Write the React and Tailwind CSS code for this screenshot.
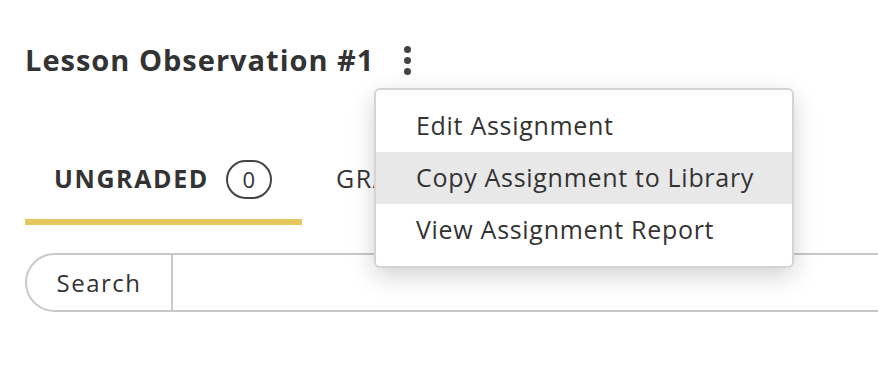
import React from 'react';

const menuItems = ['Edit Assignment', 'Copy Assignment to Library', 'View Assignment Report'];

export default function App() {
  return (
    <div className="relative h-[382px] w-[878px] overflow-hidden bg-white text-[#333] font-['Open_Sans',sans-serif]">
      <div className="pl-[25px] pt-[40px]">
        {/* Title */}
        <div className="flex items-center h-[40px]">
          <h1 className="text-[29px] font-bold tracking-[1px] text-[#333]">Lesson Observation #1</h1>
          <button className="ml-[30px] flex flex-col items-center gap-[4px]">
            <span className="block h-[7px] w-[7px] rounded-full bg-[#444]" />
            <span className="block h-[7px] w-[7px] rounded-full bg-[#444]" />
            <span className="block h-[7px] w-[7px] rounded-full bg-[#444]" />
          </button>
        </div>

        {/* Tabs */}
        <div className="mt-[79px] flex">
          <div className="flex w-[277px] flex-col">
            <div className="flex h-[40px] items-center pl-[29px]">
              <span className="text-[25px] font-bold tracking-[1.6px] text-[#333]">UNGRADED</span>
              <span className="ml-[17px] flex h-[39px] w-[46px] items-center justify-center rounded-full border-2 border-[#444] text-[22px] text-[#333]">0</span>
            </div>
            <div className="mt-[20px] h-[6px] bg-[#e6c95e]" />
          </div>
          <div className="flex h-[40px] items-center pl-[34px]">
            <span className="text-[25px] tracking-[1.6px] text-[#333]">GRADED</span>
          </div>
        </div>

        {/* Search */}
        <div className="mt-[28px] flex h-[59px] w-[900px] rounded-l-full border-2 border-[#c8c8c8]">
          <div className="flex w-[146px] items-center justify-center border-r-2 border-[#c8c8c8] text-[24px] tracking-[1.5px] text-[#333]">
            Search
          </div>
          <div className="flex-1" />
        </div>
      </div>

      {/* Dropdown menu */}
      <div className="absolute left-[374px] top-[88px] w-[420px] rounded-[6px] border-2 border-[#d4d4d4] bg-white py-[10px] shadow-[0_8px_24px_rgba(0,0,0,0.18)]">
        {menuItems.map((item, i) => (
          <div
            key={item}
            className={`flex h-[52px] items-center pl-[40px] text-[25px] tracking-[0.7px] text-[#333] ${i === 1 ? 'bg-[#e8e8e8]' : ''}`}
          >
            {item}
          </div>
        ))}
      </div>
    </div>
  );
}
